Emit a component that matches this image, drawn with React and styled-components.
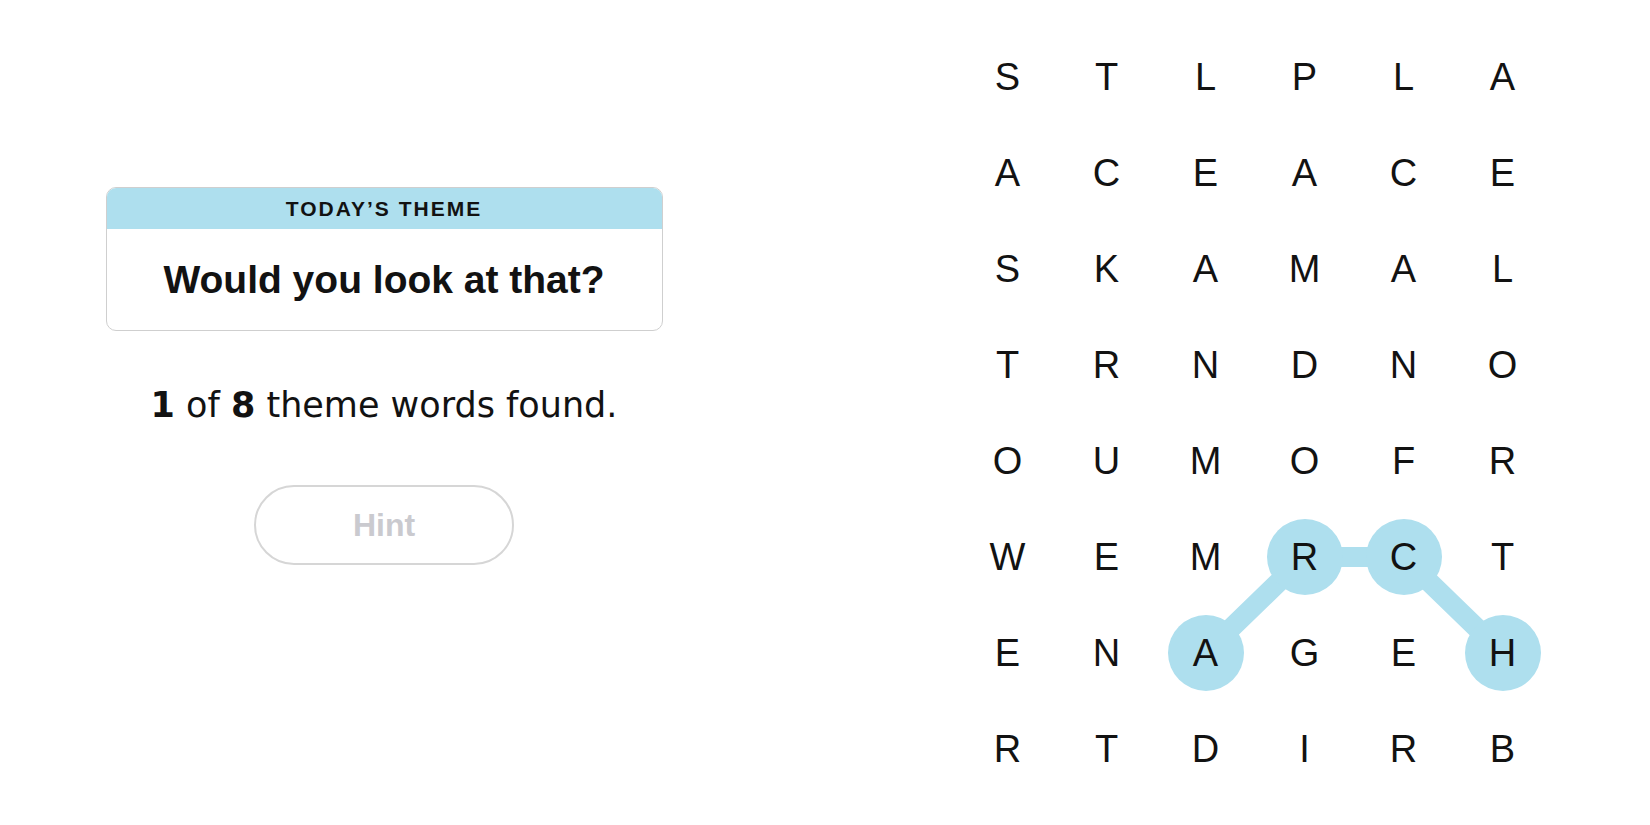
import React from "react";
import styled, { createGlobalStyle } from "styled-components";

const BOARD = [
  "STLPLA",
  "ACEACE",
  "SKAMAL",
  "TRNDNO",
  "OUMOFR",
  "WEMRCT",
  "ENAGEH",
  "RTDIRB",
];

const CELL_W = 99;
const CELL_H = 96;
const BLUE = "#aedfee";

// current selection, in order of the path
const path = [
  [6, 2],
  [5, 3],
  [5, 4],
  [6, 5],
];

const isSelected = (r, c) => path.some(([pr, pc]) => pr === r && pc === c);

const GlobalStyle = createGlobalStyle`
  body {
    margin: 0;
    background: #ffffff;
    color: #121212;
    font-family: "Liberation Sans", Arial, sans-serif;
  }
`;

const App = () => {
  const points = path
    .map(([r, c]) => `${c * CELL_W + CELL_W / 2},${r * CELL_H + CELL_H / 2}`)
    .join(" ");

  return (
    <>
      <GlobalStyle />
      <Page>
        <LeftPanel>
          <ThemeCard>
            <ThemeHeader>TODAY’S THEME</ThemeHeader>
            <ThemeBody>Would you look at that?</ThemeBody>
          </ThemeCard>
          <Progress>
            <b>1</b> of <b>8</b> theme words found.
          </Progress>
          <HintBtn disabled>Hint</HintBtn>
        </LeftPanel>

        <Board>
          <Lines width={CELL_W * 6} height={CELL_H * 8}>
            <polyline
              points={points}
              fill="none"
              stroke={BLUE}
              strokeWidth="20"
              strokeLinejoin="round"
              strokeLinecap="round"
            />
          </Lines>
          {BOARD.map((row, r) =>
            row.split("").map((ch, c) => (
              <Cell key={`${r}-${c}`}>
                <Letter $selected={isSelected(r, c)}>{ch}</Letter>
              </Cell>
            ))
          )}
        </Board>
      </Page>
    </>
  );
};

export default App;

const Page = styled.div`
  display: flex;
  flex-direction: row;
  align-items: flex-start;
  padding-top: 29px;
  width: 1650px;
  height: 825px;
  box-sizing: border-box;
`;

const LeftPanel = styled.div`
  width: 768px;
  display: flex;
  flex-direction: column;
  align-items: center;
  padding-top: 158px;
`;

const ThemeCard = styled.div`
  width: 557px;
  border: 1px solid #cfcfcf;
  border-radius: 10px;
  overflow: hidden;
  box-sizing: border-box;
`;

const ThemeHeader = styled.div`
  height: 41px;
  background: ${BLUE};
  display: flex;
  align-items: center;
  justify-content: center;
  font-size: 21px;
  font-weight: 700;
  letter-spacing: 2px;
  color: #121212;
`;

const ThemeBody = styled.div`
  height: 101px;
  display: flex;
  align-items: center;
  justify-content: center;
  font-size: 39px;
  font-weight: 700;
  color: #121212;
`;

const Progress = styled.div`
  margin-top: 54px;
  font-family: "DejaVu Sans", "Liberation Sans", sans-serif;
  font-size: 35px;
  line-height: 40px;
  color: #121212;

  b {
    font-weight: 700;
  }
`;

const HintBtn = styled.button`
  margin-top: 60px;
  width: 260px;
  height: 80px;
  border: 2px solid #d6d6d6;
  border-radius: 40px;
  background: #ffffff;
  font-family: "Liberation Sans", Arial, sans-serif;
  font-size: 32px;
  font-weight: 700;
  color: #cacacf;
  cursor: default;
`;

const Board = styled.div`
  position: relative;
  margin-left: 190px;
  display: grid;
  grid-template-columns: repeat(6, ${CELL_W}px);
  grid-auto-rows: ${CELL_H}px;
`;

const Lines = styled.svg`
  position: absolute;
  left: 0;
  top: 0;
  pointer-events: none;
`;

const Cell = styled.div`
  position: relative;
  z-index: 1;
  display: flex;
  align-items: center;
  justify-content: center;
`;

const Letter = styled.span`
  width: 76px;
  height: 76px;
  border-radius: 50%;
  display: flex;
  align-items: center;
  justify-content: center;
  font-size: 38px;
  color: #121212;
  background: ${(props) => (props.$selected ? BLUE : "transparent")};
`;
